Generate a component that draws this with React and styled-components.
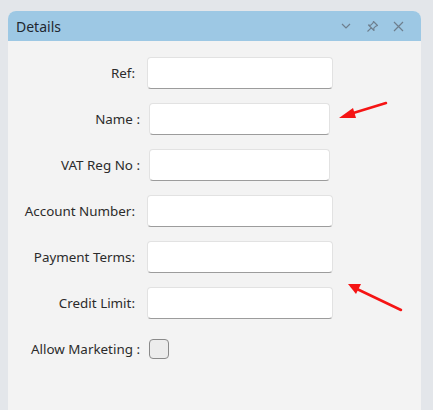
import React from 'react';
import styled, { createGlobalStyle } from 'styled-components';

const GlobalStyle = createGlobalStyle`
  html, body {
    margin: 0;
    padding: 0;
    background: #e3e6ea;
    font-family: "Noto Sans", "Open Sans", sans-serif;
  }
`;

const Page = styled.div`
  position: relative;
  width: 433px;
  height: 410px;
  padding: 11px 12px 0 8px;
  box-sizing: border-box;
  overflow: hidden;
`;

const Panel = styled.div`
  height: 100%;
  background: #f3f3f3;
  border-radius: 8px 8px 0 0;
  display: flex;
  flex-direction: column;
`;

const Header = styled.div`
  height: 30px;
  background: #9dc8e4;
  border-radius: 8px 8px 0 0;
  display: flex;
  align-items: center;
  padding: 0 10px 0 8px;

  h1 {
    flex: 1;
    margin: 0;
    font-size: 14px;
    font-weight: normal;
    color: #1f2730;
  }
`;

const IconButton = styled.span`
  width: 26px;
  height: 20px;
  display: flex;
  align-items: center;
  justify-content: center;
  color: #6e7f8e;
`;

const Body = styled.div`
  padding-top: 9px;
  display: flex;
  flex-direction: column;
`;

const Row = styled.div`
  height: 46px;
  display: flex;
  align-items: center;
`;

const Label = styled.label`
  width: ${(p) => p.$labelWidth}px;
  padding-right: ${(p) => p.$gap}px;
  box-sizing: border-box;
  text-align: right;
  font-size: 13.4px;
  color: #2b2b2b;
  white-space: nowrap;
`;

const Input = styled.div`
  width: ${(p) => p.$width}px;
  height: 32px;
  box-sizing: border-box;
  background: #fff;
  border: 1px solid #e2e2e2;
  border-bottom: 1px solid #9c9c9c;
  border-radius: 4px;
`;

const Checkbox = styled.div`
  width: 20px;
  height: 20px;
  box-sizing: border-box;
  background: #ececec;
  border: 1px solid #8a8a8a;
  border-radius: 4px;
`;

const Arrows = styled.svg`
  position: absolute;
  left: 0;
  top: 0;
  pointer-events: none;
`;

const fields = [
  { label: 'Ref:', wide: true },
  { label: 'Name :', wide: false },
  { label: 'VAT Reg No :', wide: false },
  { label: 'Account Number:', wide: true },
  { label: 'Payment Terms:', wide: true },
  { label: 'Credit Limit:', wide: true },
];

function App() {
  return (
    <>
      <GlobalStyle />
      <Page>
        <Panel>
          <Header>
            <h1>Details</h1>
            <IconButton>
              <svg width="10" height="6" viewBox="0 0 10 6">
                <path d="M1 1 L5 5 L9 1" fill="none" stroke="currentColor" strokeWidth="1.2" />
              </svg>
            </IconButton>
            <IconButton>
              <svg width="13" height="13" viewBox="0 0 13 13">
                <path
                  d="M7.5 1.5 L11.5 5.5 L9.8 6.2 L7.8 8.2 L8 10.5 L2.5 5 L4.8 5.2 L6.8 3.2 Z M5.2 7.8 L1.5 11.5"
                  fill="none"
                  stroke="currentColor"
                  strokeWidth="1.1"
                  strokeLinejoin="round"
                />
              </svg>
            </IconButton>
            <IconButton>
              <svg width="11" height="11" viewBox="0 0 11 11">
                <path d="M1 1 L10 10 M10 1 L1 10" stroke="currentColor" strokeWidth="1.2" />
              </svg>
            </IconButton>
          </Header>
          <Body>
            {fields.map((f) => (
              <Row key={f.label}>
                <Label $labelWidth={f.wide ? 139 : 141} $gap={f.wide ? 12 : 9}>{f.label}</Label>
                <Input $width={f.wide ? 186 : 181} />
              </Row>
            ))}
            <Row>
              <Label $labelWidth={141} $gap={9}>Allow Marketing :</Label>
              <Checkbox />
            </Row>
          </Body>
        </Panel>
        <Arrows width="433" height="410" viewBox="0 0 433 410">
          <path d="M386 103 L350 114" stroke="#f51414" strokeWidth="2.5" strokeLinecap="round" />
          <path d="M339 118 L353 108 L356 118 Z" fill="#f51414" />
          <path d="M401 310 L357 289" stroke="#f51414" strokeWidth="2.5" strokeLinecap="round" />
          <path d="M348 284 L361 284 L356 294 Z" fill="#f51414" />
        </Arrows>
      </Page>
    </>
  );
}

export default App;
